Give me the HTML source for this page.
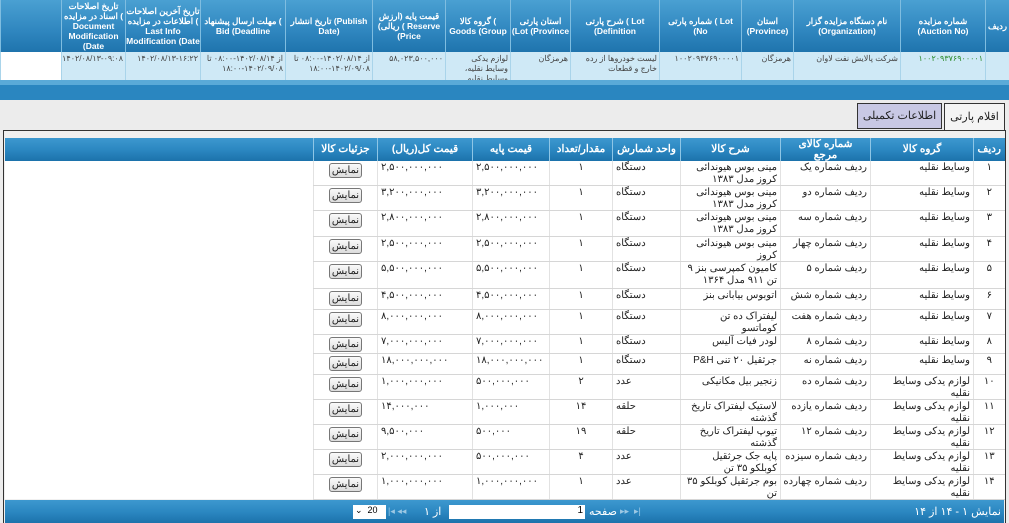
<!DOCTYPE html>
<html><head><meta charset="utf-8"><style>
*{margin:0;padding:0;box-sizing:border-box}
body{width:1009px;height:523px;overflow:hidden;background:#ececec;font-family:Tahoma,"Liberation Sans","Noto Sans CJK SC",sans-serif;font-size:10px;color:#222;position:relative}
.a{position:absolute}
.hd{background:linear-gradient(#4aa0d2,#2f86bf 60%,#1f74ad);color:#fff;font-weight:bold;text-align:center;display:flex;align-items:center;justify-content:center;border-left:1px solid #7fbde0;line-height:10px;font-size:8.5px;overflow:hidden}
.dr{background:#cfe9f6;border-left:1px solid #a9d4ea;direction:rtl;text-align:right;padding:2px 2px;font-size:8px;line-height:10px;color:#444;overflow:hidden}
table{border-collapse:collapse;table-layout:fixed;direction:rtl}
th{background:linear-gradient(#3d98cf,#2a86c0 55%,#1c72ab);color:#fff;font-weight:bold;font-size:10.5px;height:23px;border-left:1px solid #8ec6e6;line-height:11px;padding:0}
td{background:#fff;border-bottom:1px solid #d6d6d6;border-left:1px solid #e2e2e2;font-size:10px;vertical-align:top;padding:1px 3px 0;line-height:11.5px;text-align:right;overflow:hidden;white-space:normal}
td div{overflow:hidden}
td.c{text-align:center}td.l{text-align:left}
.btn{display:inline-block;border:1px solid #777;border-radius:3px;background:linear-gradient(#fafafa,#dcdcdc);font-size:10px;padding:0 2px;line-height:13px;margin-top:1px}
</style></head><body>
<div class="a" style="left:0;top:0;width:1009px;height:100px;background:#2a86c0"></div>
<div class="a" style="left:0;top:0;width:1009px;height:52px;display:flex;direction:ltr">
<div class="hd" style="width:61px"></div>
<div class="hd" style="width:64px">تاریخ اصلاحات اسناد در مزایده ( Document Modification (Date</div>
<div class="hd" style="width:75px">تاریخ آخرین اصلاحات اطلاعات در مزایده ( Last Info Modification (Date</div>
<div class="hd" style="width:85px">مهلت ارسال پیشنهاد ( Bid (Deadline</div>
<div class="hd" style="width:87px">تاریخ انتشار (Publish Date)</div>
<div class="hd" style="width:73px">قیمت پایه (ارزش ریالی) ( Reserve (Price</div>
<div class="hd" style="width:65px">گروه کالا ( Goods (Group</div>
<div class="hd" style="width:60px">استان پارتی (Lot (Province</div>
<div class="hd" style="width:89px">شرح پارتی ( Lot (Definition</div>
<div class="hd" style="width:82px">شماره پارتی ( Lot (No</div>
<div class="hd" style="width:52px">استان (Province)</div>
<div class="hd" style="width:107px">نام دستگاه مزایده گزار (Organization)</div>
<div class="hd" style="width:85px">شماره مزایده (Auction No)</div>
<div class="hd" style="width:24px">ردیف</div>
</div>
<div class="a" style="left:0;top:52px;width:1009px;height:28px;display:flex;direction:ltr">
<div class="dr" style="width:61px;background:#fff"></div>
<div class="dr" style="width:64px">۱۴۰۲/۰۸/۱۳-۰۹:۰۸</div>
<div class="dr" style="width:75px">۱۴۰۲/۰۸/۱۳-۱۶:۲۲</div>
<div class="dr" style="width:85px">از ۱۴۰۲/۰۸/۱۴-۰۸:۰۰ تا ۱۴۰۲/۰۹/۰۸-۱۸:۰۰</div>
<div class="dr" style="width:87px">از ۱۴۰۲/۰۸/۱۴-۰۸:۰۰ تا ۱۴۰۲/۰۹/۰۸-۱۸:۰۰</div>
<div class="dr" style="width:73px">۵۸,۰۲۳,۵۰۰,۰۰۰</div>
<div class="dr" style="width:65px">لوازم یدکی وسایط نقلیه، وسایط نقلیه</div>
<div class="dr" style="width:60px">هرمزگان</div>
<div class="dr" style="width:89px">لیست خودروها از رده خارج و قطعات</div>
<div class="dr" style="width:82px">۱۰۰۲۰۹۳۷۶۹۰۰۰۰۱</div>
<div class="dr" style="width:52px">هرمزگان</div>
<div class="dr" style="width:107px">شرکت پالایش نفت لاوان</div>
<div class="dr" style="width:85px;color:#2a8a2a">۱۰۰۲۰۹۳۷۶۹۰۰۰۰۱</div>
<div class="dr" style="width:24px"></div>
</div>
<div class="a" style="left:0;top:80px;width:1009px;height:5px;background:#5aaad8"></div>
<div class="a" style="left:944px;top:103px;width:61px;height:28px;border:1px solid #333;border-bottom:none;background:#f4f4f4;font-size:11px;text-align:center;line-height:26px">اقلام پارتی</div>
<div class="a" style="left:857px;top:103px;width:85px;height:26px;border:1px solid #333;background:#c8c8e4;font-size:11px;text-align:center;line-height:24px">اطلاعات تکمیلی</div>
<div class="a" style="left:3px;top:130px;width:1003px;height:393px;border:1px solid #333;border-bottom:none;background:#f0f0f0"></div>
<div class="a" style="left:5px;top:138px;width:999px;height:23px;background:linear-gradient(#3d98cf,#2a86c0 55%,#1c72ab)"></div>
<div class="a" style="left:5px;top:161px;width:308px;height:338px;background:#fff"></div>
<table class="a" style="left:313px;top:138px;width:691px">
<colgroup><col style="width:31px"><col style="width:103px"><col style="width:90px"><col style="width:100px"><col style="width:68px"><col style="width:63px"><col style="width:77px"><col style="width:95px"><col style="width:64px"></colgroup>
<tr><th>ردیف</th><th>گروه کالا</th><th>شماره کالای<br>مرجع</th><th>شرح کالا</th><th>واحد شمارش</th><th>مقدار/تعداد</th><th>قیمت پایه</th><th>قیمت کل(ریال)</th><th>جزئیات کالا</th></tr>
<tr><td class="c"><div style="height:23px">۱</div></td><td>وسایط نقلیه</td><td>ردیف شماره یک</td><td>مینی بوس هیوندائی کروز مدل ۱۳۸۳</td><td class="l">دستگاه</td><td class="c">۱</td><td class="l">۲,۵۰۰,۰۰۰,۰۰۰</td><td class="l">۲,۵۰۰,۰۰۰,۰۰۰</td><td class="c"><span class="btn">نمایش</span></td></tr>
<tr><td class="c"><div style="height:23px">۲</div></td><td>وسایط نقلیه</td><td>ردیف شماره دو</td><td>مینی بوس هیوندائی کروز مدل ۱۳۸۳</td><td class="l">دستگاه</td><td class="c">۱</td><td class="l">۳,۲۰۰,۰۰۰,۰۰۰</td><td class="l">۳,۲۰۰,۰۰۰,۰۰۰</td><td class="c"><span class="btn">نمایش</span></td></tr>
<tr><td class="c"><div style="height:24px">۳</div></td><td>وسایط نقلیه</td><td>ردیف شماره سه</td><td>مینی بوس هیوندائی کروز مدل ۱۳۸۳</td><td class="l">دستگاه</td><td class="c">۱</td><td class="l">۲,۸۰۰,۰۰۰,۰۰۰</td><td class="l">۲,۸۰۰,۰۰۰,۰۰۰</td><td class="c"><span class="btn">نمایش</span></td></tr>
<tr><td class="c"><div style="height:23px">۴</div></td><td>وسایط نقلیه</td><td>ردیف شماره چهار</td><td>مینی بوس هیوندائی کروز</td><td class="l">دستگاه</td><td class="c">۱</td><td class="l">۲,۵۰۰,۰۰۰,۰۰۰</td><td class="l">۲,۵۰۰,۰۰۰,۰۰۰</td><td class="c"><span class="btn">نمایش</span></td></tr>
<tr><td class="c"><div style="height:25px">۵</div></td><td>وسایط نقلیه</td><td>ردیف شماره ۵</td><td>کامیون کمپرسی بنز ۹ تن ۹۱۱ مدل ۱۳۶۴</td><td class="l">دستگاه</td><td class="c">۱</td><td class="l">۵,۵۰۰,۰۰۰,۰۰۰</td><td class="l">۵,۵۰۰,۰۰۰,۰۰۰</td><td class="c"><span class="btn">نمایش</span></td></tr>
<tr><td class="c"><div style="height:19px">۶</div></td><td>وسایط نقلیه</td><td>ردیف شماره شش</td><td>اتوبوس بیابانی بنز</td><td class="l">دستگاه</td><td class="c">۱</td><td class="l">۴,۵۰۰,۰۰۰,۰۰۰</td><td class="l">۴,۵۰۰,۰۰۰,۰۰۰</td><td class="c"><span class="btn">نمایش</span></td></tr>
<tr><td class="c"><div style="height:23px">۷</div></td><td>وسایط نقلیه</td><td>ردیف شماره هفت</td><td>لیفتراک ده تن کوماتسو</td><td class="l">دستگاه</td><td class="c">۱</td><td class="l">۸,۰۰۰,۰۰۰,۰۰۰</td><td class="l">۸,۰۰۰,۰۰۰,۰۰۰</td><td class="c"><span class="btn">نمایش</span></td></tr>
<tr><td class="c"><div style="height:17px">۸</div></td><td>وسایط نقلیه</td><td>ردیف شماره ۸</td><td>لودر فیات آلیس</td><td class="l">دستگاه</td><td class="c">۱</td><td class="l">۷,۰۰۰,۰۰۰,۰۰۰</td><td class="l">۷,۰۰۰,۰۰۰,۰۰۰</td><td class="c"><span class="btn">نمایش</span></td></tr>
<tr><td class="c"><div style="height:19px">۹</div></td><td>وسایط نقلیه</td><td>ردیف شماره نه</td><td>جرثقیل ۲۰ تنی P&amp;H</td><td class="l">دستگاه</td><td class="c">۱</td><td class="l">۱۸,۰۰۰,۰۰۰,۰۰۰</td><td class="l">۱۸,۰۰۰,۰۰۰,۰۰۰</td><td class="c"><span class="btn">نمایش</span></td></tr>
<tr><td class="c"><div style="height:23px">۱۰</div></td><td>لوازم یدکی وسایط نقلیه</td><td>ردیف شماره ده</td><td>زنجیر بیل مکانیکی</td><td class="l">عدد</td><td class="c">۲</td><td class="l">۵۰۰,۰۰۰,۰۰۰</td><td class="l">۱,۰۰۰,۰۰۰,۰۰۰</td><td class="c"><span class="btn">نمایش</span></td></tr>
<tr><td class="c"><div style="height:23px">۱۱</div></td><td>لوازم یدکی وسایط نقلیه</td><td>ردیف شماره یازده</td><td>لاستیک لیفتراک تاریخ گذشته</td><td class="l">حلقه</td><td class="c">۱۴</td><td class="l">۱,۰۰۰,۰۰۰</td><td class="l">۱۴,۰۰۰,۰۰۰</td><td class="c"><span class="btn">نمایش</span></td></tr>
<tr><td class="c"><div style="height:23px">۱۲</div></td><td>لوازم یدکی وسایط نقلیه</td><td>ردیف شماره ۱۲</td><td>تیوپ لیفتراک تاریخ گذشته</td><td class="l">حلقه</td><td class="c">۱۹</td><td class="l">۵۰۰,۰۰۰</td><td class="l">۹,۵۰۰,۰۰۰</td><td class="c"><span class="btn">نمایش</span></td></tr>
<tr><td class="c"><div style="height:23px">۱۳</div></td><td>لوازم یدکی وسایط نقلیه</td><td style="white-space:nowrap">ردیف شماره سیزده</td><td>پایه جک جرثقیل کوبلکو ۳۵ تن</td><td class="l">عدد</td><td class="c">۴</td><td class="l">۵۰۰,۰۰۰,۰۰۰</td><td class="l">۲,۰۰۰,۰۰۰,۰۰۰</td><td class="c"><span class="btn">نمایش</span></td></tr>
<tr><td class="c"><div style="height:23px">۱۴</div></td><td>لوازم یدکی وسایط نقلیه</td><td style="white-space:nowrap">ردیف شماره چهارده</td><td>بوم جرثقیل کوبلکو ۳۵ تن</td><td class="l">عدد</td><td class="c">۱</td><td class="l">۱,۰۰۰,۰۰۰,۰۰۰</td><td class="l">۱,۰۰۰,۰۰۰,۰۰۰</td><td class="c"><span class="btn">نمایش</span></td></tr>
</table>
<div class="a" style="left:5px;top:500px;width:999px;height:23px;background:linear-gradient(#3d98cf,#2a86c0 55%,#1c72ab)"></div>
<div class="a" style="right:8px;top:505px;color:#fff;font-size:11px;direction:rtl">نمایش ۱ - ۱۴ از ۱۴</div>
<div class="a" style="left:620px;top:506px;color:#9cc8e4;font-size:9px">▸▸ &nbsp;▸|</div>
<div class="a" style="left:589px;top:505px;color:#fff;font-size:11px">صفحه</div>
<div class="a" style="left:449px;top:505px;width:136px;height:14px;background:#fff;font-size:10px;text-align:right;color:#000;padding-right:2px">1</div>
<div class="a" style="left:424px;top:505px;color:#fff;font-size:11px">از ۱</div>
<div class="a" style="left:388px;top:506px;color:#9cc8e4;font-size:9px">|◂ ◂◂</div>
<div class="a" style="left:353px;top:505px;width:33px;height:14px;background:#fff;font-size:9px;color:#000;padding-left:2px">⌄ &nbsp;20</div>
</body></html>
